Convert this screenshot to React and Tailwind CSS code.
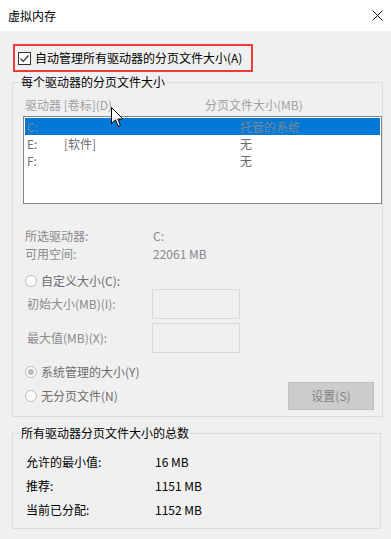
import React from "react";

const FONT = { fontFamily: '"Noto Sans CJK SC", "Noto Sans", sans-serif' };

function Radio({ checked }) {
  return (
    <span className="relative flex h-[12px] w-[12px] shrink-0 items-center justify-center rounded-full border border-[#bcbcbc] bg-[#fcfcfc]">
      {checked && <span className="h-[6px] w-[6px] rounded-full bg-[#bcbcbc]" />}
    </span>
  );
}

export default function App() {
  return (
    <div
      className="relative h-[539px] w-[391px] overflow-hidden bg-[#f0f0f0] text-[12px] text-black"
      style={FONT}
    >
      {/* title bar */}
      <div className="flex h-[31px] items-center justify-between bg-white pl-[8px] pr-[7px]">
        <span className="leading-[16px]">虚拟内存</span>
        <svg width="11" height="11" viewBox="0 0 11 11" className="mr-[1px]">
          <path d="M0.5 0.5 L10.5 10.5 M10.5 0.5 L0.5 10.5" stroke="#111" strokeWidth="1" fill="none" />
        </svg>
      </div>

      <div className="pl-[12px]">
        {/* auto manage checkbox with red highlight */}
        <div className="ml-[1px] mt-[13px] flex h-[28px] w-[240px] items-center border-2 border-[#ee3b3b] pl-[3px]">
          <span className="flex h-[13px] w-[13px] items-center justify-center border border-[#333] bg-white">
            <svg width="11" height="11" viewBox="0 0 11 11">
              <path d="M1.5 5.5 L4.2 8.3 L9.5 2.5" stroke="#333" strokeWidth="1.2" fill="none" />
            </svg>
          </span>
          <span className="ml-[4px] leading-[16px]">自动管理所有驱动器的分页文件大小(A)</span>
        </div>

        {/* per-drive group */}
        <fieldset className="mt-[2px] w-[369px] border border-[#dcdcdc] pb-[6px]">
          <legend className="ml-[6px] px-[2px] leading-[16px]">每个驱动器的分页文件大小</legend>

          <div className="mt-[7px] flex pl-[12px] leading-[16px] text-[#a0a0a0]">
            <span className="w-[180px]">驱动器 [卷标](D)</span>
            <span>分页文件大小(MB)</span>
          </div>

          <div className="ml-[10px] mt-[3px] h-[88px] w-[359px] border border-[#828790] bg-white p-[1px] text-[#6d6d6d]">
            <div className="flex h-[17px] items-center bg-[#0078d7] pl-[2px] leading-[17px] text-[#7a8796]">
              <span className="w-[37px]">C:</span>
              <span className="w-[176px]"></span>
              <span>托管的系统</span>
            </div>
            <div className="flex h-[17px] items-center pl-[2px] leading-[17px]">
              <span className="w-[37px]">E:</span>
              <span className="w-[176px]">[软件]</span>
              <span>无</span>
            </div>
            <div className="flex h-[17px] items-center pl-[2px] leading-[17px]">
              <span className="w-[37px]">F:</span>
              <span className="w-[176px]"></span>
              <span>无</span>
            </div>
          </div>

          <div className="mt-[23px] pl-[12px] leading-[18px] text-[#8a8a8a]">
            <div className="flex">
              <span className="w-[128px]">所选驱动器:</span>
              <span>C:</span>
            </div>
            <div className="flex">
              <span className="w-[128px]">可用空间:</span>
              <span>22061 MB</span>
            </div>
          </div>

          <div className="mt-[10px] flex h-[16px] items-center pl-[12px] leading-[16px] text-[#6d6d6d]">
            <Radio />
            <span className="ml-[4px]">自定义大小(C):</span>
          </div>

          <div className="flex items-center pl-[14px] text-[#8a8a8a]">
            <span className="w-[125px] leading-[16px]">初始大小(MB)(I):</span>
            <span className="h-[30px] w-[88px] border border-[#d9d9d9] bg-[#f0f0f0]" />
          </div>
          <div className="mt-[4px] flex items-center pl-[14px] text-[#8a8a8a]">
            <span className="w-[125px] leading-[16px]">最大值(MB)(X):</span>
            <span className="h-[30px] w-[88px] border border-[#d9d9d9] bg-[#f0f0f0]" />
          </div>

          <div className="mt-[11px] flex h-[16px] items-center pl-[12px] leading-[16px] text-[#6d6d6d]">
            <Radio checked />
            <span className="ml-[4px]">系统管理的大小(Y)</span>
          </div>

          <div className="mt-[2px] flex items-center justify-between pl-[12px] pr-[8px] text-[#6d6d6d]">
            <div className="flex items-center leading-[16px]">
              <Radio />
              <span className="ml-[4px]">无分页文件(N)</span>
            </div>
            <div className="flex h-[28px] w-[86px] items-center justify-center border border-[#bfbfbf] bg-[#cccccc] leading-[16px] text-[#838383]">
              设置(S)
            </div>
          </div>
        </fieldset>

        {/* totals group */}
        <fieldset className="mt-[8px] w-[369px] border border-[#dcdcdc] pb-[6px]">
          <legend className="ml-[6px] px-[2px] leading-[16px]">所有驱动器分页文件大小的总数</legend>
          <div className="mt-[9px] pl-[13px] leading-[24px]">
            <div className="flex">
              <span className="w-[129px]">允许的最小值:</span>
              <span>16 MB</span>
            </div>
            <div className="flex">
              <span className="w-[129px]">推荐:</span>
              <span>1151 MB</span>
            </div>
            <div className="flex">
              <span className="w-[129px]">当前已分配:</span>
              <span>1152 MB</span>
            </div>
          </div>
        </fieldset>
      </div>

      {/* mouse cursor overlay */}
      <svg
        className="absolute left-[111px] top-[107px]"
        width="13"
        height="21"
        viewBox="0 0 13 21"
      >
        <path
          d="M0.5 0.5 L0.5 16.5 L4.5 12.8 L7.2 19.3 L9.4 18.4 L6.8 12 L12 12 Z"
          fill="#fff"
          stroke="#000"
          strokeWidth="1"
          strokeLinejoin="round"
        />
      </svg>
    </div>
  );
}
